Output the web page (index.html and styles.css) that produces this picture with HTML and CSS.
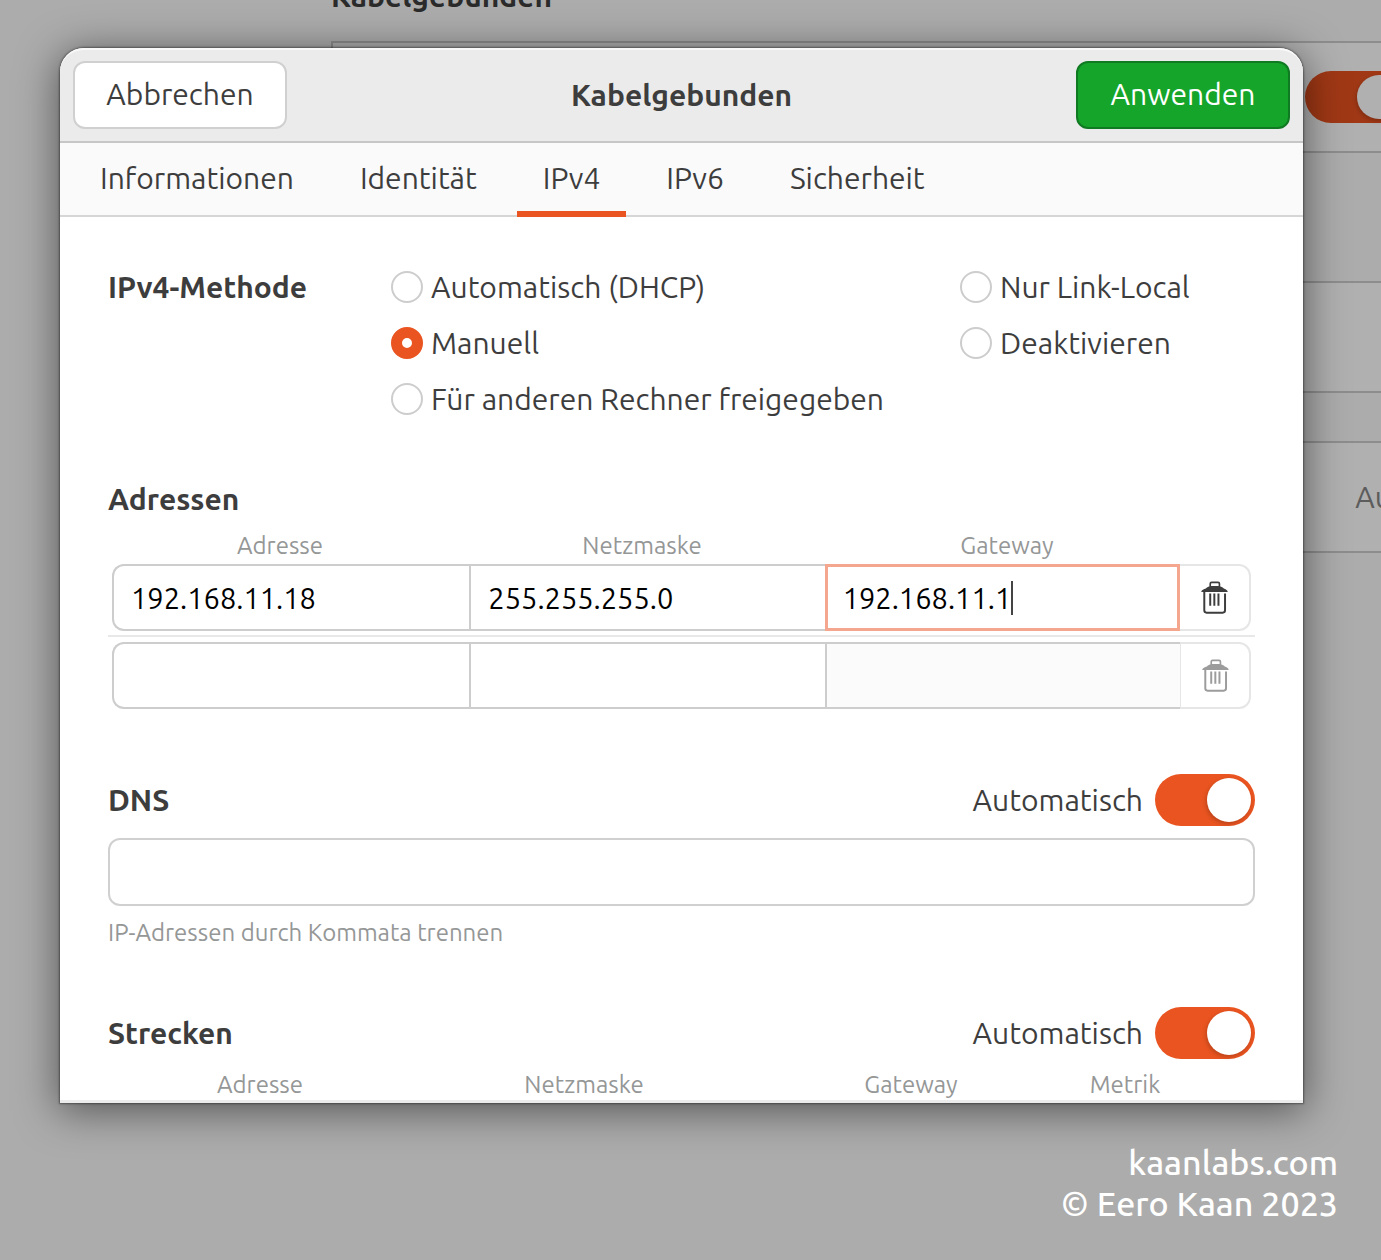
FILE: index.html
```
<!DOCTYPE html>
<html lang="de">
<head>
<meta charset="utf-8">
<meta name="viewport" content="width=device-width, initial-scale=1">
<title>Kabelgebunden</title>
<link rel="stylesheet" href="styles.css">
</head>
<body>
<svg class="defs" aria-hidden="true">
  <symbol id="trash" viewBox="240 122 82 100">
    <rect x="268" y="126" width="28" height="16" rx="4" fill="none" stroke="currentColor" stroke-width="5"/>
    <path d="M241 155C241 148 252 148 258 142Q264 137 270 137H292Q300 137 306 142C312 148 321 148 321 155Z" fill="currentColor"/>
    <path d="M250 153V211Q250 218 257 218H306Q313 218 313 211V160" fill="none" stroke="currentColor" stroke-width="6"/>
    <path d="M268 160V197M280.500 160V197M293 160V197" fill="none" stroke="currentColor" stroke-width="6"/>
  </symbol>
</svg>
<div class="stage">
  <div class="settings" inert>
    <h2 class="settings-title">Kabelgebunden</h2>
    <div class="settings-card"><input class="switch" type="checkbox" role="switch" aria-label="Kabelgebunden" checked></div>
    <div class="settings-card second"></div>
    <div class="settings-card third"><span>Aus</span></div>
  </div>

  <main class="dialog" role="dialog" aria-labelledby="title">
    <header class="titlebar">
      <button class="btn" type="button">Abbrechen</button>
      <h1 class="title" id="title">Kabelgebunden</h1>
      <button class="btn apply" type="button">Anwenden</button>
    </header>
    <nav class="tabs">
      <a class="tab" href="#info">Informationen</a>
      <a class="tab" href="#identity">Identität</a>
      <a class="tab active" href="#ipv4" aria-current="page">IPv4</a>
      <a class="tab" href="#ipv6">IPv6</a>
      <a class="tab" href="#security">Sicherheit</a>
    </nav>
    <form class="content" id="ipv4">
      <div class="methods" role="radiogroup" aria-labelledby="method">
        <h2 class="heading" id="method">IPv4-Methode</h2>
        <div class="options">
          <label class="option"><input class="radio" type="radio" name="method">Automatisch (DHCP)</label>
          <label class="option"><input class="radio" type="radio" name="method" checked>Manuell</label>
          <label class="option"><input class="radio" type="radio" name="method">Für anderen Rechner freigegeben</label>
        </div>
        <div class="options">
          <label class="option"><input class="radio" type="radio" name="method">Nur Link-Local</label>
          <label class="option"><input class="radio" type="radio" name="method">Deaktivieren</label>
        </div>
      </div>

      <section class="addresses">
        <h2 class="heading">Adressen</h2>
        <table class="entries">
          <thead><tr><th>Adresse</th><th>Netzmaske</th><th>Gateway</th></tr></thead>
          <tbody>
            <tr>
              <td><input class="cell" type="text" aria-label="Adresse 1" value="192.168.11.18"></td>
              <td><input class="cell" type="text" aria-label="Netzmaske 1" value="255.255.255.0"></td>
              <td class="focused"><input class="cell fit" type="text" size="10" aria-label="Gateway 1" value="192.168.11.1"><span class="caret"></span></td>
              <td class="remove"><button class="trash" type="button" aria-label="Adresse 1 entfernen"><svg><use href="#trash"/></svg></button></td>
            </tr>
            <tr>
              <td><input class="cell" type="text" aria-label="Adresse 2"></td>
              <td><input class="cell" type="text" aria-label="Netzmaske 2"></td>
              <td class="disabled"><input class="cell" type="text" aria-label="Gateway 2" disabled></td>
              <td class="remove"><button class="trash" type="button" aria-label="Adresse 2 entfernen" disabled><svg><use href="#trash"/></svg></button></td>
            </tr>
          </tbody>
        </table>
      </section>

      <section class="dns">
        <div class="section-head">
          <h2 class="heading">DNS</h2>
          <label class="auto">Automatisch<input class="switch" type="checkbox" role="switch" checked></label>
        </div>
        <input class="servers" type="text" aria-label="DNS" aria-describedby="hint">
        <p class="hint" id="hint">IP-Adressen durch Kommata trennen</p>
      </section>

      <section class="routes">
        <div class="section-head">
          <h2 class="heading">Strecken</h2>
          <label class="auto">Automatisch<input class="switch" type="checkbox" role="switch" checked></label>
        </div>
        <table class="entries route-entries">
          <thead><tr><th>Adresse</th><th>Netzmaske</th><th>Gateway</th><th>Metrik</th></tr></thead>
        </table>
      </section>
    </form>
  </main>
  <footer class="credit"><p>kaanlabs.com</p><p>© Eero Kaan 2023</p></footer>
</div>
</body>
</html>
```
FILE: styles.css
```
* { box-sizing: border-box; }

body {
  margin: 0;
  background: #acacac;
  color: #3d3d3d;
  font: 450 30px/36px Ubuntu, "Noto Sans", sans-serif;
}

h1, h2, p { margin: 0; font-size: inherit; }
input, button { font: inherit; color: inherit; margin: 0; }
.defs { display: none; }

.stage {
  position: relative;
  min-height: 100vh;
  overflow: hidden;
}

/* dimmed settings window behind the dialog */
.settings {
  position: absolute;
  top: -22px;
  left: 331px;
  right: -120px;
}
.settings-title { color: #2b2b2b; margin-bottom: 27px; }
.settings-card {
  display: flex;
  align-items: center;
  justify-content: flex-end;
  height: 112px;
  padding-right: 94px;
  border: 2px solid #8d8d8d;
  background: #b0b0b0;
  color: #5c5c5c;
}
.settings-card.second { margin-top: 128px; }
.settings-card.third { margin-top: 48px; }
.settings .switch { background-color: #a03815; }
.settings .switch::before { background: #b0b0b0; }

.dialog {
  position: relative;
  margin: 48px 78px 0 60px;
  border-radius: 24px 24px 0 0;
  background: #fff;
  box-shadow: 0 0 2px 1px rgba(0, 0, 0, .4), 0 6px 40px 2px rgba(0, 0, 0, .5);
}

.titlebar {
  display: grid;
  grid-template-columns: 214px 1fr 214px;
  align-items: center;
  padding: 11px 13px 12px;
  border-top: 2px solid #f9f9f9;
  border-bottom: 2px solid #c6c6c6;
  border-radius: 24px 24px 0 0;
  background: #ebebeb;
}
.title { text-align: center; }
.btn {
  height: 68px;
  padding: 0 0 2px;
  border: 2px solid #d0d0d0;
  border-radius: 12px;
  background: #fff;
}
.btn.apply {
  border-color: #107a22;
  background: #14a52a;
  color: #fff;
}

.tabs {
  display: flex;
  gap: 14px;
  padding-left: 14px;
  border-bottom: 2px solid #d6d6d6;
  background: #fafafa;
}
.tab {
  height: 74px;
  margin-bottom: -2px;
  padding: 17px 26px 0;
  border-bottom: 6px solid transparent;
  color: inherit;
  text-decoration: none;
}
.tab.active { border-color: #e95420; }

.content { padding: 52px 48px 0; }
.heading { line-height: 36px; }

.methods {
  display: grid;
  grid-template-columns: 283px 1fr 295px;
}
.options { display: grid; gap: 20px; align-content: start; }
.option { display: flex; align-items: center; gap: 8px; }
.radio {
  appearance: none;
  width: 32px;
  height: 32px;
  border: 2px solid #cdcdcd;
  border-radius: 50%;
  background: #fff;
}
.radio:checked { border: 11px solid #e95420; }

.addresses { margin-top: 64px; }
.entries, .entries thead, .entries tbody { display: block; }
.entries tr { display: grid; }
.entries th {
  padding: 0;
  color: #959797;
  font-size: 24px;
  font-weight: inherit;
  line-height: 28px;
}
.entries thead tr { grid-template-columns: 344fr 380fr 350fr 73fr; }
.entries thead { padding: 15px 0 4px; }
.entries tbody tr {
  grid-template-columns: 357fr 355fr 355fr 71px;
  padding: 0 4px;
}
.entries tbody tr + tr {
  margin-top: 4px;
  padding-top: 5px;
  border-top: 2px solid #e8e8e8;
}
.entries td {
  display: flex;
  align-items: center;
  height: 67px;
  padding: 0;
  border: 2px solid #cdcdcd;
  border-right: 0;
}
.entries td:first-child { border-radius: 12px 0 0 12px; }
.entries .disabled { background: #fbfbfb; }
.entries .focused { border: 3px solid #f4a78e; }
.entries .remove {
  border: 2px solid #e6e6e6;
  border-left-width: 1px;
  border-radius: 0 12px 12px 0;
}
.entries .focused + .remove { border-left: 0; }
.cell {
  width: 100%;
  height: 60px;
  padding: 0 17px;
  border: 0;
  outline: 0;
  background: transparent;
  color: #000;
  font-size: 29px;
}
.cell.fit {
  field-sizing: content;
  width: auto;
  padding: 0 0 0 15px;
}
.caret { width: 2px; height: 34px; background: #444; }
.trash {
  width: 100%;
  height: 60px;
  padding: 0;
  border: 0;
  background: none;
}
.trash svg { display: block; width: 27px; height: 33px; margin: 0 auto; }
.trash:disabled { color: #9c9c9c; }

.section-head {
  display: flex;
  align-items: center;
  justify-content: space-between;
}
.auto { display: flex; align-items: center; gap: 12px; }
.switch {
  appearance: none;
  display: flex;
  justify-content: flex-end;
  width: 100px;
  height: 52px;
  padding: 4px;
  border-radius: 26px;
  background: #e95420;
}
.switch::before {
  content: "";
  width: 44px;
  height: 44px;
  border-radius: 50%;
  background: #fff;
  box-shadow: -1px 2px 4px rgba(0, 0, 0, .2);
}

.dns { margin-top: 65px; }
.servers {
  display: block;
  width: 100%;
  height: 68px;
  margin-top: 12px;
  padding: 0 17px;
  border: 2px solid #d0d0d0;
  border-radius: 12px;
  background: #fff;
}
.hint {
  margin-top: 13px;
  color: #959797;
  font-size: 24px;
  line-height: 28px;
}

.routes {
  margin: 60px -48px 0;
  padding: 0 48px;
  border-bottom: 3px solid #ececec;
}
.route-entries thead { padding: 12px 0 1px; }
.route-entries thead tr { grid-template-columns: 304fr 344fr 310fr 118fr 71fr; }

.credit {
  margin: 39px 43px 0;
  color: #fff;
  font: 500 34px/41px Ubuntu, "Noto Sans", sans-serif;
  text-align: right;
}
```
